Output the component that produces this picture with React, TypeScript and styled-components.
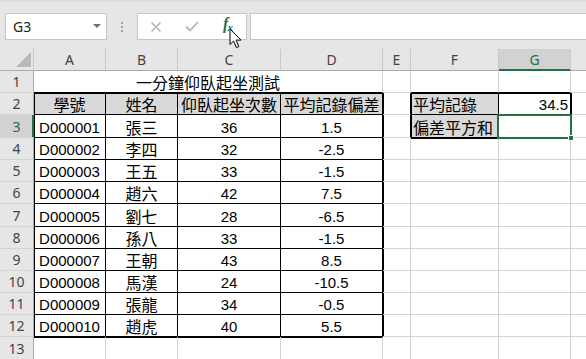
import styled, { createGlobalStyle } from 'styled-components';

const GlobalStyle = createGlobalStyle`
  html, body {
    margin: 0;
    padding: 0;
    background: #fff;
  }
  body {
    font-family: 'Noto Sans', 'Liberation Sans', sans-serif;
  }
`;

const COLS = ['A', 'B', 'C', 'D', 'E', 'F', 'G', 'H'];
const GREEN = '#217346';

const DATA: [string, string, number, string][] = [
  ['D000001', '張三', 36, '1.5'],
  ['D000002', '李四', 32, '-2.5'],
  ['D000003', '王五', 33, '-1.5'],
  ['D000004', '趙六', 42, '7.5'],
  ['D000005', '劉七', 28, '-6.5'],
  ['D000006', '孫八', 33, '-1.5'],
  ['D000007', '王朝', 43, '8.5'],
  ['D000008', '馬漢', 24, '-10.5'],
  ['D000009', '張龍', 34, '-0.5'],
  ['D000010', '趙虎', 40, '5.5'],
];

type Align = 'left' | 'center' | 'right';

const isLatin = (v?: string | number) => v !== undefined && !/[\u4e00-\u9fff]/.test(String(v));

// which edges of a cell carry the table's black lines
function frame(row: number, col: string) {
  const tableCol = 'ABCD'.includes(col);
  const boxCol = col === 'F' || col === 'G';
  const inTable = row >= 2 && row <= 12 && tableCol;
  return {
    $rightInk: inTable || ((row === 2 || row === 3) && 'EFG'.includes(col)),
    $bottomInk: inTable || (row === 1 && tableCol) || (row >= 1 && row <= 3 && boxCol),
    $thickTop: ((row === 2 || row === 13) && tableCol) || ((row === 2 || row === 4) && boxCol),
    $thickLeft:
      (row >= 2 && row <= 12 && (col === 'A' || col === 'E')) ||
      ((row === 2 || row === 3) && (col === 'F' || col === 'H')),
  };
}

const App = () => {
  const cells: JSX.Element[] = [];

  cells.push(
    <Corner key="corner">
      <svg width="15" height="15" viewBox="0 0 15 15">
        <polygon points="15,0 15,15 0,15" fill="#b9b9b9" />
      </svg>
    </Corner>
  );
  // column H is only a sliver at the right edge, its letter is off screen
  COLS.forEach((c) =>
    cells.push(
      <ColHead key={`h${c}`} $active={c === 'G'}>
        {c === 'H' ? null : c}
      </ColHead>
    )
  );

  for (let r = 1; r <= 13; r++) {
    cells.push(
      <RowHead key={`r${r}`} $active={r === 3}>
        {r}
      </RowHead>
    );
    const content: Record<string, { text?: string | number; align?: Align; fill?: boolean }> = {};
    if (r === 2) {
      content.A = { text: '學號', fill: true };
      content.B = { text: '姓名', fill: true };
      content.C = { text: '仰臥起坐次數', fill: true };
      content.D = { text: '平均記錄偏差', fill: true };
      content.F = { text: '平均記錄', fill: true, align: 'left' };
      content.G = { text: '34.5', align: 'right' };
    }
    if (r >= 3 && r <= 12) {
      const [id, name, count, diff] = DATA[r - 3];
      content.A = { text: id };
      content.B = { text: name };
      content.C = { text: count };
      content.D = { text: diff };
    }
    if (r === 3) content.F = { text: '偏差平方和', fill: true, align: 'left' };

    COLS.forEach((c) => {
      if (r === 1 && 'BCD'.includes(c)) return;
      const item = content[c] ?? {};
      if (r === 1 && c === 'A') {
        cells.push(
          <Cell key={`${c}${r}`} $span={4} {...frame(r, c)}>
            一分鐘仰臥起坐測試
          </Cell>
        );
        return;
      }
      cells.push(
        <Cell
          key={`${c}${r}`}
          $align={item.align}
          $fill={item.fill}
          $latin={isLatin(item.text)}
          {...frame(r, c)}
        >
          {item.text}
          {r === 3 && c === 'G' && (
            <Selection>
              <FillHandle />
            </Selection>
          )}
        </Cell>
      );
    });
  }

  return (
    <Window>
      <GlobalStyle />
      <TopBar>
        <NameBox>
          G3
          <Caret />
        </NameBox>
        <Dots>
          <span />
          <span />
          <span />
        </Dots>
        <FormulaButtons>
          <Slot>
            <svg width="12" height="12" viewBox="0 0 12 12">
              <path d="M1.5 1.5 L10.5 10.5 M10.5 1.5 L1.5 10.5" stroke="#b5b5b5" strokeWidth="1.6" />
            </svg>
          </Slot>
          <Slot>
            <svg width="14" height="11" viewBox="0 0 14 11">
              <path d="M1 5.5 L5 9.5 L13 1" stroke="#b5b5b5" strokeWidth="1.8" fill="none" />
            </svg>
          </Slot>
          <Slot>
            <Fx>
              f<sub>x</sub>
            </Fx>
          </Slot>
        </FormulaButtons>
        <FormulaInput />
      </TopBar>
      <Sheet>{cells}</Sheet>
      <Pointer width="13" height="21" viewBox="0 0 13 21">
        <path
          d="M1 1 L1 16.5 L4.6 13 L7.4 19.6 L9.8 18.6 L7.1 12.1 L12 12.1 Z"
          fill="#fff"
          stroke="#000"
          strokeWidth="1"
          strokeLinejoin="round"
        />
      </Pointer>
    </Window>
  );
};

export default App;

const Window = styled.div`
  position: relative;
  width: 586px;
  height: 359px;
  overflow: hidden;
  background: #fff;
`;

const TopBar = styled.div`
  height: 49px;
  box-sizing: border-box;
  display: flex;
  align-items: flex-start;
  padding: 11px 0 0 5px;
  background: #e6e6e6;
  border-top: 2px solid #dadada;
`;

const NameBox = styled.div`
  position: relative;
  width: 102px;
  height: 27px;
  box-sizing: border-box;
  display: flex;
  align-items: center;
  padding: 0 0 0 7px;
  background: #fff;
  border: 1px solid #c6c6c6;
  font-size: 14px;
  color: #222;
`;

const Caret = styled.span`
  position: absolute;
  right: 5px;
  top: 10px;
  width: 0;
  height: 0;
  border-left: 4px solid transparent;
  border-right: 4px solid transparent;
  border-top: 4px solid #707070;
`;

const Dots = styled.div`
  width: 30px;
  height: 27px;
  display: flex;
  flex-direction: column;
  align-items: center;
  justify-content: center;
  gap: 2px;

  span {
    width: 2px;
    height: 2px;
    background: #a0a0a0;
  }
`;

const FormulaButtons = styled.div`
  width: 110px;
  height: 27px;
  box-sizing: border-box;
  display: flex;
  background: #fff;
  border: 1px solid #c6c6c6;
`;

const Slot = styled.div`
  width: 36px;
  display: flex;
  align-items: center;
  justify-content: center;
`;

const Fx = styled.span`
  font-family: 'Liberation Serif', serif;
  font-style: italic;
  font-weight: bold;
  font-size: 16px;
  line-height: 16px;
  color: ${GREEN};
  margin-top: -2px;

  sub {
    font-size: 11px;
    vertical-align: -2px;
    margin-left: -1px;
  }
`;

const FormulaInput = styled.div`
  flex: 1;
  height: 27px;
  box-sizing: border-box;
  margin-left: 3px;
  background: #fff;
  border: 1px solid #c6c6c6;
  border-right: none;
`;

const Sheet = styled.div`
  display: grid;
  grid-template-columns: 34px 72px 72px 103px 102px 28px 88px 72px 72px;
  grid-template-rows: 22px 22px 22px 23px 22px 22px 22px 23px 22px 22px 22px 22px 22px 23px;
  font-family: 'Liberation Sans', 'Noto Sans CJK TC', sans-serif;
`;

const Corner = styled.div`
  box-sizing: border-box;
  display: flex;
  align-items: flex-end;
  justify-content: flex-end;
  padding: 0 2px 3px 0;
  background: #e6e6e6;
  border-right: 1px solid #c8c8c8;
  border-bottom: 1px solid #ababab;
`;

const ColHead = styled.div<{ $active?: boolean }>`
  box-sizing: border-box;
  display: flex;
  align-items: center;
  justify-content: center;
  background: ${(p) => (p.$active ? '#d2d2d2' : '#e6e6e6')};
  border-right: 1px solid #c8c8c8;
  border-bottom: 1px solid ${(p) => (p.$active ? GREEN : '#ababab')};
  box-shadow: ${(p) => (p.$active ? `inset 0 -1px 0 ${GREEN}` : 'none')};
  font-family: 'Noto Sans', sans-serif;
  font-size: 14px;
  color: ${(p) => (p.$active ? GREEN : '#444')};
`;

const RowHead = styled.div<{ $active?: boolean }>`
  box-sizing: border-box;
  display: flex;
  align-items: center;
  justify-content: center;
  background: ${(p) => (p.$active ? '#d2d2d2' : '#e6e6e6')};
  border-right: 1px solid ${(p) => (p.$active ? GREEN : '#ababab')};
  border-bottom: 1px solid #d4d4d4;
  box-shadow: ${(p) => (p.$active ? `inset -1px 0 0 ${GREEN}` : 'none')};
  font-family: 'Noto Sans', sans-serif;
  font-size: 14px;
  color: ${(p) => (p.$active ? GREEN : '#444')};
`;

const Cell = styled.div<{
  $align?: Align;
  $fill?: boolean;
  $latin?: boolean;
  $span?: number;
  $rightInk?: boolean;
  $bottomInk?: boolean;
  $thickTop?: boolean;
  $thickLeft?: boolean;
}>`
  position: relative;
  box-sizing: border-box;
  min-width: 0;
  grid-column: ${(p) => (p.$span ? `span ${p.$span}` : 'auto')};
  display: flex;
  align-items: flex-end;
  justify-content: ${(p) =>
    p.$align === 'left' ? 'flex-start' : p.$align === 'right' ? 'flex-end' : 'center'};
  padding: ${(p) => (p.$latin ? '0 2px 1px' : '0 2px')};
  background: ${(p) => (p.$fill ? '#d9d9d9' : '#fff')};
  border-right: 1px solid ${(p) => (p.$rightInk ? '#000' : '#d4d4d4')};
  border-bottom: 1px solid ${(p) => (p.$bottomInk ? '#000' : '#d4d4d4')};
  box-shadow: ${(p) =>
    [p.$thickTop && 'inset 0 1px 0 #000', p.$thickLeft && 'inset 1px 0 0 #000']
      .filter(Boolean)
      .join(', ') || 'none'};
  font-size: ${(p) => (p.$latin ? '15px' : '16px')};
  line-height: 16px;
  color: #000;
  white-space: nowrap;
`;

const Selection = styled.div`
  position: absolute;
  left: -2px;
  top: -1px;
  right: -2px;
  bottom: -2px;
  z-index: 2;
  border: 2px solid ${GREEN};
  pointer-events: none;
`;

const FillHandle = styled.div`
  position: absolute;
  right: -4px;
  bottom: -4px;
  width: 4px;
  height: 4px;
  background: ${GREEN};
  border: 1px solid #fff;
`;

const Pointer = styled.svg`
  position: absolute;
  left: 229px;
  top: 28px;
  z-index: 5;
`;
